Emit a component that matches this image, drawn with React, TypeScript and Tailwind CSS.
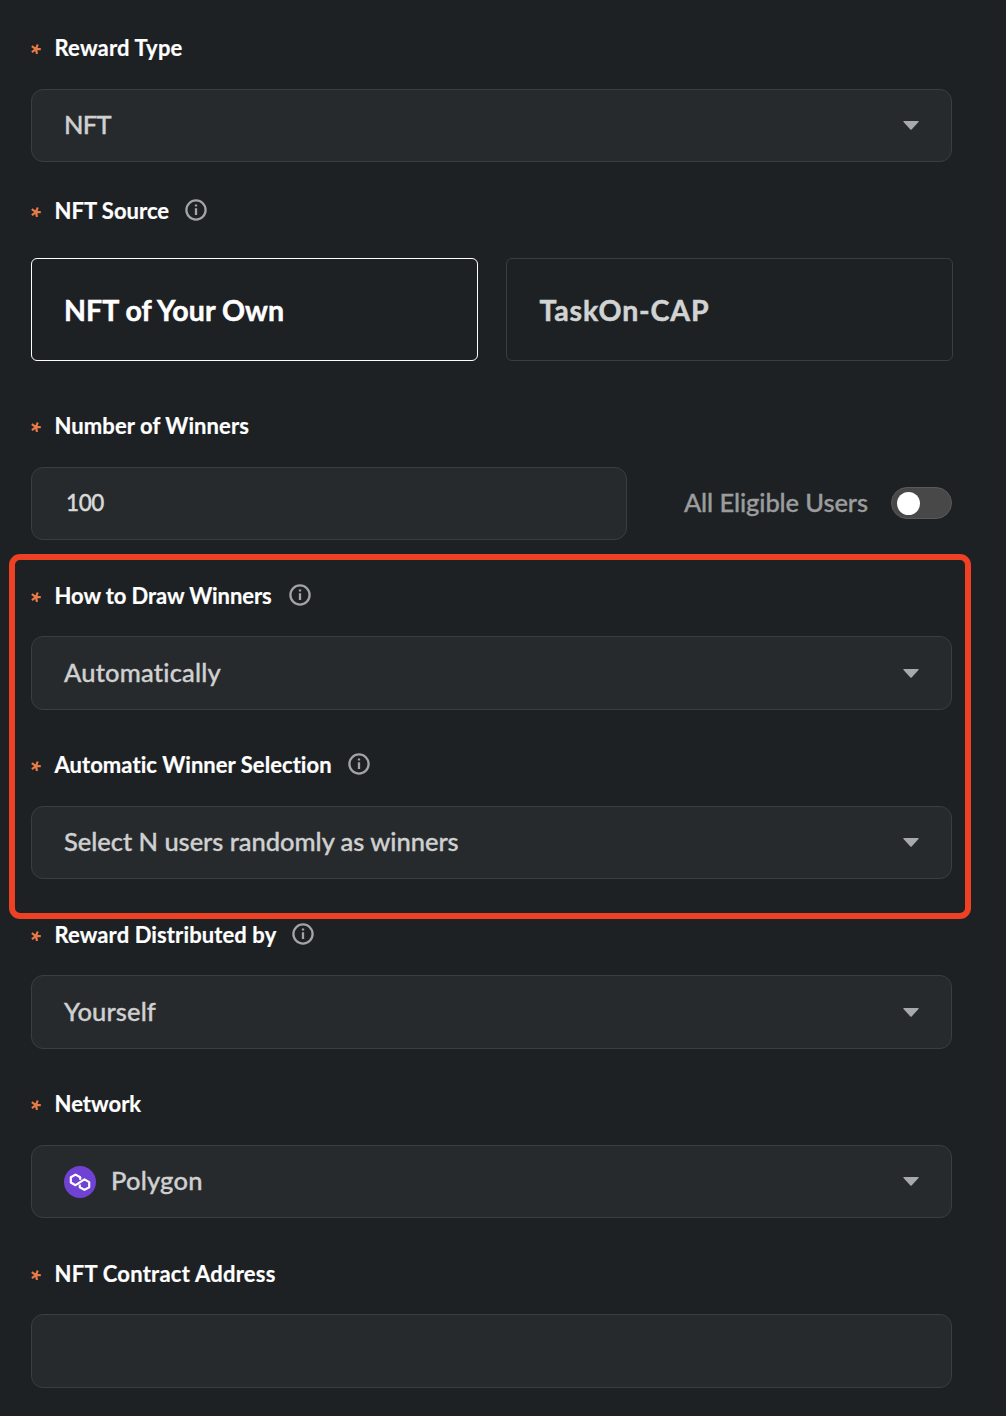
import type { ReactNode } from "react";

function Asterisk() {
  return (
    <svg viewBox="0 0 10 10" className="mt-[3px] size-2.5 shrink-0" fill="none" stroke="#e87a45" strokeWidth="2.2">
      <path d="M5 5.2H9.8M5 5.2L6.7 0.5M5 5.2L0.8 2.2M5 5.2L0.9 8.2M5 5.2L6 9.9" />
    </svg>
  );
}

function InfoIcon() {
  return (
    <svg viewBox="0 0 22 22" className="-mt-px size-[22px] shrink-0" fill="none" stroke="#a3a4a5">
      <circle cx="11" cy="11" r="9.6" strokeWidth="2.3" />
      <path d="M11 9.2V16M11 5.6V7.6" strokeWidth="2.3" />
    </svg>
  );
}

function Caret() {
  return (
    <svg viewBox="0 0 16 9" className="h-[9px] w-4 shrink-0" fill="#a8a9aa">
      <path d="M0.8 0H15.2Q16 0.2 15.5 0.9L8.6 8.6Q8 9.1 7.4 8.6L0.5 0.9Q0 0.2 0.8 0Z" />
    </svg>
  );
}

function PolygonLogo() {
  return (
    <svg viewBox="0 0 32 32" className="mr-[15px] size-8 shrink-0">
      <circle cx="16" cy="16" r="16" fill="#6f42d3" />
      <path
        d="M16.2 13.8V11.3L11.5 8.6L6.8 11.3V16.5L11.5 19.2L20.5 13.4L25.2 16.1V21.2L20.5 23.9L15.8 21.2V18.6"
        fill="none"
        stroke="#fff"
        strokeWidth="2.2"
        strokeLinejoin="round"
      />
    </svg>
  );
}

type FieldProps = {
  label: string;
  tracking: string;
  height: string;
  gap?: string;
  info?: string;
  children: ReactNode;
};

function Field({ label, tracking, height, gap = "mt-[26px]", info, children }: FieldProps) {
  return (
    <div className={`${height} shrink-0`}>
      <div className="flex h-8 items-center">
        <Asterisk />
        <span className={`mt-px ml-[13.5px] text-[22px] leading-8 font-bold whitespace-nowrap text-white [-webkit-text-stroke:0.2px] ${tracking}`}>{label}</span>
        {info && (
          <span className={info}>
            <InfoIcon />
          </span>
        )}
      </div>
      <div className={gap}>{children}</div>
    </div>
  );
}

function Box({ height = "h-[73px]", children }: { height?: string; children?: ReactNode }) {
  return (
    <div className={`flex w-[921px] items-center rounded-xl border border-[#3a3e41] bg-[#272a2d] pr-8 pl-8 ${height}`}>
      {children}
    </div>
  );
}

function Select({ value, tracking, height, icon }: { value: string; tracking: string; height?: string; icon?: ReactNode }) {
  return (
    <Box height={height}>
      {icon}
      <span className={`flex-1 pb-0.5 text-[25.5px] font-medium whitespace-nowrap text-[#cfd0d0] [-webkit-text-stroke:0.35px] ${tracking}`}>{value}</span>
      <Caret />
    </Box>
  );
}

export default function App() {
  return (
    <div className="flex h-[1416px] w-[1006px] flex-col overflow-hidden bg-[#1e2124] pt-[31px] pl-[31px] font-['Lato',sans-serif] [font-variant-ligatures:none]">
      <Field label="Reward Type" tracking="tracking-[0.19px]" height="h-[163px]">
        <Select value="NFT" tracking="tracking-[-0.7px]" />
      </Field>

      <Field label="NFT Source" tracking="tracking-[0.02px]" height="h-[215px]" gap="mt-8" info="ml-[15.5px]">
        <div className="flex w-[922px] gap-7">
          <div className="flex h-[103px] flex-1 items-center rounded-md border border-white pt-px pl-8 text-[28.5px] font-bold tracking-[0.05px] text-white [-webkit-text-stroke:0.5px]">
            NFT of Your Own
          </div>
          <div className="flex h-[103px] flex-1 items-center rounded-md border border-[#3a3e41] pt-px pl-[33px] text-[28.5px] font-bold tracking-[0.85px] text-[#d2d3d3] [-webkit-text-stroke:0.5px]">
            TaskOn-CAP
          </div>
        </div>
      </Field>

      <Field label="Number of Winners" tracking="tracking-[0.09px]" height="h-[170px]">
        <div className="flex w-[921px] items-center">
          <div className="flex h-[73px] w-[596px] items-center rounded-xl border border-[#3a3e41] bg-[#272a2d] pb-0.5 pl-[34px] text-[22.5px] font-medium tracking-[-0.4px] text-[#d8d9d9] [-webkit-text-stroke:0.35px]">
            100
          </div>
          <span className="ml-auto pb-0.5 text-[25.5px] font-medium tracking-[-0.1px] text-[#9b9c9d] [-webkit-text-stroke:0.35px]">All Eligible Users</span>
          <div className="mb-px ml-[23px] flex h-8 w-[61px] items-center rounded-full border border-[#595959] bg-[#484848] pl-[5px]">
            <div className="size-[23px] rounded-full bg-white" />
          </div>
        </div>
      </Field>

      <div className="relative shrink-0">
        <Field label="How to Draw Winners" tracking="tracking-[-0.09px]" height="h-[169px]" gap="mt-[25px]" info="ml-[17px]">
          <Select value="Automatically" tracking="tracking-[0.2px]" height="h-[74px]" />
        </Field>
        <Field label="Automatic Winner Selection" tracking="tracking-[0.05px]" height="h-[170px]" info="ml-4">
          <Select value="Select N users randomly as winners" tracking="tracking-[-0.04px]" />
        </Field>
        <div className="pointer-events-none absolute -top-[25px] -left-[22px] h-[365px] w-[962px] rounded-[11px] border-6 border-[#ee4023]" />
      </div>

      <Field label="Reward Distributed by" tracking="tracking-[0.11px]" height="h-[169px]" gap="mt-[25px]" info="ml-4">
        <Select value="Yourself" tracking="tracking-[0.13px]" height="h-[74px]" />
      </Field>

      <Field label="Network" tracking="tracking-[0.02px]" height="h-[170px]">
        <Select value="Polygon" tracking="tracking-[0.2px]" icon={<PolygonLogo />} />
      </Field>

      <Field label="NFT Contract Address" tracking="tracking-[0.24px]" height="h-[159px]" gap="mt-[25px]">
        <Box height="h-[74px]" />
      </Field>
    </div>
  );
}
